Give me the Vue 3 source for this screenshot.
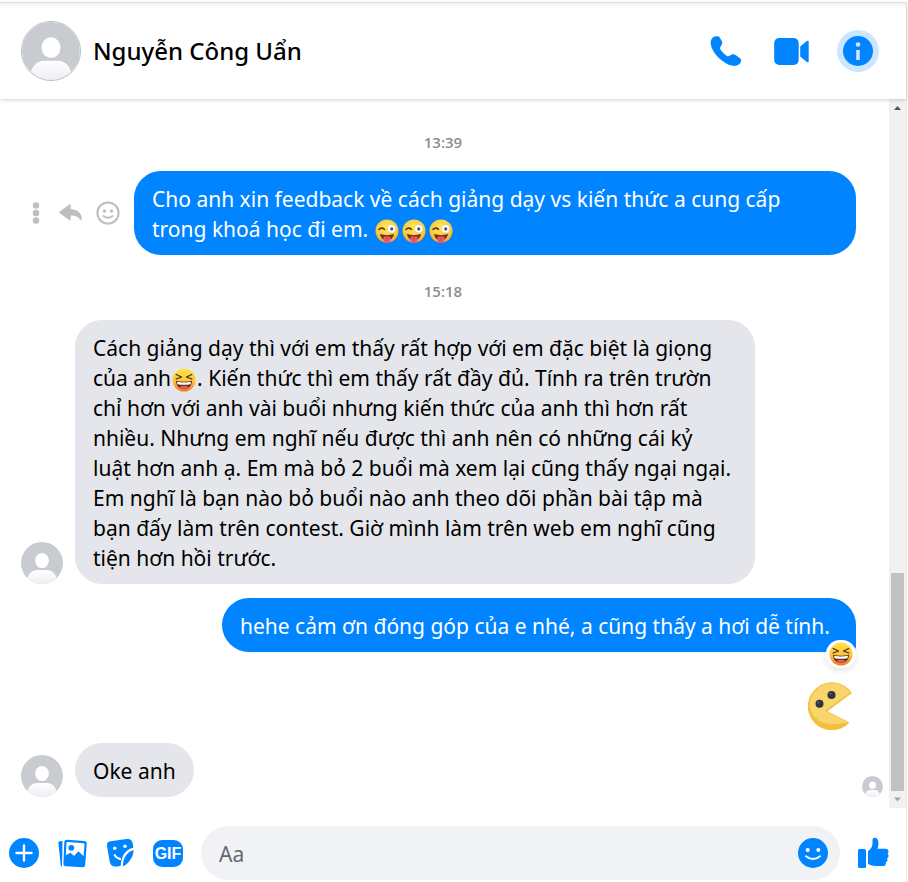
<script setup>
import { ref } from 'vue'

const draft = ref('')

const questionLines = [
  { text: 'Cho anh xin feedback về cách giảng dạy vs kiến thức a cung cấp' },
  { text: 'trong khoá học đi em. ', winks: 3 },
]

const answerLines = [
  { text: 'Cách giảng dạy thì với em thấy rất hợp với em đặc biệt là giọng' },
  { text: 'của anh', laugh: true, after: '. Kiến thức thì em thấy rất đầy đủ. Tính ra trên trườn' },
  { text: 'chỉ hơn với anh vài buổi nhưng kiến thức của anh thì hơn rất' },
  { text: 'nhiều. Nhưng em nghĩ nếu được thì anh nên có những cái kỷ' },
  { text: 'luật hơn anh ạ. Em mà bỏ 2 buổi mà xem lại cũng thấy ngại ngại.' },
  { text: 'Em nghĩ là bạn nào bỏ buổi nào anh theo dõi phần bài tập mà' },
  { text: 'bạn đấy làm trên contest. Giờ mình làm trên web em nghĩ cũng' },
  { text: 'tiện hơn hồi trước.' },
]
</script>

<template>
  <div class="chat">
    <svg class="defs" width="0" height="0" aria-hidden="true">
      <defs>
        <linearGradient id="bodyFade" x1="0" y1="0" x2="0" y2="1">
          <stop offset="0" stop-color="#fff" />
          <stop offset="1" stop-color="#eceef3" />
        </linearGradient>
        <radialGradient id="faceYellow" cx=".5" cy=".35" r=".65">
          <stop offset="0" stop-color="#ffe65c" />
          <stop offset=".7" stop-color="#fccb3a" />
          <stop offset="1" stop-color="#f3a528" />
        </radialGradient>
        <linearGradient id="faceOrange" x1="0" y1="0" x2="0" y2="1">
          <stop offset="0" stop-color="#ffe24d" />
          <stop offset=".55" stop-color="#fcc437" />
          <stop offset="1" stop-color="#f3762b" />
        </linearGradient>
        <clipPath id="round"><circle cx="30" cy="30" r="30" /></clipPath>
      </defs>
      <symbol id="person" viewBox="0 0 60 60">
        <g clip-path="url(#round)">
          <rect width="60" height="60" fill="#c8cbd0" />
          <ellipse cx="30" cy="26.500" rx="9.800" ry="10.800" fill="#fff" />
          <path d="M8 60c0-12 6-20 15-20h14c9 0 15 8 15 20z" fill="url(#bodyFade)" />
        </g>
      </symbol>
      <symbol id="wink" viewBox="0 0 24 24">
        <circle cx="12" cy="12" r="11.500" fill="url(#faceYellow)" />
        <path d="M4 10.500q2.500-2.700 5.500-.2" fill="none" stroke="#553b1c" stroke-width="1.600" stroke-linecap="round" />
        <circle cx="16.700" cy="9.800" r="4.100" fill="#fff" stroke="#c9b67c" stroke-width=".4" />
        <circle cx="16.700" cy="9.900" r="1.600" fill="#3b5573" />
        <path d="M5 15q7 2.300 14 0c-.7 4.200-3.500 6.300-7 6.300S5.700 19.200 5 15z" fill="#6d2f1f" />
        <path d="M8.500 17.500h7v3.700a3.500 3 0 0 1-7 0z" fill="#f0566a" />
        <path d="M12 18.500v3" stroke="#c92f4a" stroke-width=".8" />
      </symbol>
      <symbol id="laugh" viewBox="0 0 24 24">
        <circle cx="12" cy="12" r="11.500" fill="url(#faceOrange)" />
        <path d="M4.200 6.500 9.500 9l-5.300 2M19.800 6.500 14.500 9l5.300 2" fill="none" stroke="#493018" stroke-width="1.300" stroke-linecap="round" stroke-linejoin="round" />
        <path d="M4 12.800q8 1.800 16 0c0 5-3.300 8-8 8s-8-3-8-8z" fill="#5b2b20" />
        <path d="M5 13.700q7 1.400 14 0l-.5 2.500q-6.500 1.200-13 0z" fill="#fff" />
        <path d="M7.300 18.800q4.700-2 9.400 0-2 1.700-4.700 1.700t-4.700-1.700z" fill="#ee5a62" />
      </symbol>
    </svg>

    <main class="conversation">
      <header class="top">
        <svg class="avatar avatar-large" role="img" aria-label="Nguyễn Công Uẩn"><use href="#person" /></svg>
        <h1 class="name">Nguyễn Công Uẩn</h1>
        <div class="calls">
          <button type="button" class="icon-button" aria-label="Gọi thoại">
            <svg width="36" height="34" viewBox="0 0 36 34" fill="#0084ff">
              <path d="M6.800 2.300C3.500 2.800 1.300 6 1.700 9.400c.6 5 3.300 9.800 7.900 14.300 4.700 4.600 9.800 7.500 14.300 8.100 4 .5 7.500-1.400 8.200-4.800.2-1.200-.2-2-1.200-2.800l-4-2.900c-1.700-1.200-3.500-1.200-5.100-.3l-1.700 1c-.9.500-1.700.4-2.500-.2-2.600-1.900-4.800-4.100-6.300-6.600-.5-.8-.5-1.500 0-2.200l1.300-2c.9-1.400.9-2.700.1-4.100l-2.100-3.600c-.8-1-2.300-1.300-3.800-1z" />
            </svg>
          </button>
          <button type="button" class="icon-button" aria-label="Gọi video">
            <svg width="36" height="34" viewBox="0 0 36 34" fill="#0084ff">
              <rect x="1.200" y="4" width="24.500" height="27" rx="5" />
              <path d="M27.200 12.500 33.500 7.300c1.300-1 2.200-.5 2.200 1v18.400c0 1.500-.9 2-2.200 1l-6.300-5.200z" />
            </svg>
          </button>
          <button type="button" class="icon-button" aria-label="Thông tin cuộc trò chuyện">
            <svg width="42" height="42" viewBox="0 0 42 42">
              <circle cx="21" cy="21" r="21" fill="#cce6ff" />
              <circle cx="21" cy="21" r="15" fill="#0084ff" />
              <circle cx="21" cy="14.500" r="2.300" fill="#cce6ff" />
              <rect x="19.200" y="20" width="3.600" height="10" fill="#cce6ff" />
            </svg>
          </button>
        </div>
      </header>

      <div class="viewport">
        <section class="messages" aria-label="Tin nhắn">
          <time class="stamp">13:39</time>
          <div class="row sent">
            <div class="actions">
              <button type="button" class="icon-button" aria-label="Thêm">
                <svg width="16" height="24" viewBox="0 0 16 24" fill="#bcbec1">
                  <circle cx="8" cy="4.500" r="3.200" /><circle cx="8" cy="12" r="3.200" /><circle cx="8" cy="19.500" r="3.200" />
                </svg>
              </button>
              <button type="button" class="icon-button" aria-label="Trả lời">
                <svg width="24" height="24" viewBox="0 0 24 24" fill="#bcbec1">
                  <path d="M1.800 10.500 11 3.700c1-.7 1.700-.3 1.700.8v3.700c6.700 0 11.100 3.700 11.100 10.200 0 1-.8 1.200-1.400.4-2.300-3-5.100-4.300-9.700-4.200v3.700c0 1.100-.8 1.500-1.700.8l-9.200-6.800c-.7-.6-.7-1.200 0-1.800z" />
                </svg>
              </button>
              <button type="button" class="icon-button" aria-label="Bày tỏ cảm xúc">
                <svg width="24" height="24" viewBox="0 0 24 24" fill="none" stroke="#bcbec1" stroke-width="2">
                  <circle cx="12" cy="12" r="10.600" />
                  <circle cx="8.500" cy="10" r="1.700" fill="#bcbec1" stroke="none" />
                  <circle cx="15.500" cy="10" r="1.700" fill="#bcbec1" stroke="none" />
                  <path d="M7.500 15q4.500 3.500 9 0" stroke-linecap="round" />
                </svg>
              </button>
            </div>
            <p class="bubble bubble-sent bubble-question">
              <span v-for="line in questionLines" :key="line.text" class="line">{{ line.text }}<svg v-for="n in line.winks || 0" :key="n" class="emoji emoji-spaced" role="img" aria-label="😜"><use href="#wink" /></svg></span>
            </p>
          </div>

          <time class="stamp">15:18</time>
          <div class="row">
            <svg class="avatar" aria-hidden="true"><use href="#person" /></svg>
            <p class="bubble bubble-received bubble-answer">
              <span v-for="line in answerLines" :key="line.text" class="line">{{ line.text }}<template v-if="line.laugh"><svg class="emoji" role="img" aria-label="😆"><use href="#laugh" /></svg>{{ line.after }}</template></span>
            </p>
          </div>
          <div class="row sent follow">
            <p class="bubble bubble-sent bubble-last">
              hehe cảm ơn đóng góp của e nhé, a cũng thấy a hơi dễ tính.
              <span class="reaction"><svg width="24" height="24" role="img" aria-label="😆"><use href="#laugh" /></svg></span>
            </p>
          </div>
          <div class="row sent sticker">
            <svg width="48" height="48" viewBox="0 0 48 48" role="img" aria-label="Pacman">
              <path d="M43.500 10.500A24 24 0 1 0 41.500 40.500L19 29z" fill="#f2c03a" />
              <path d="M42 10.500A22.500 22.500 0 0 0 1.500 22c0 10 8.500 19.500 21.500 20 7 .4 12.500-1 17-2L17 29z" fill="#f8d56d" />
              <path d="M43.500 10.500 18.500 28.800" stroke="#f2c03a" stroke-width="1.500" />
              <circle cx="23.500" cy="13" r="4" fill="#2d3440" /><circle cx="11.500" cy="21.700" r="4" fill="#2d3440" />
              <circle cx="22.300" cy="11.800" r="1.200" fill="#536071" /><circle cx="10.300" cy="20.500" r="1.200" fill="#536071" />
            </svg>
          </div>
          <div class="row closing">
            <svg class="avatar" aria-hidden="true"><use href="#person" /></svg>
            <p class="bubble bubble-received">Oke anh</p>
            <svg class="seen" role="img" aria-label="Đã xem"><use href="#person" /></svg>
          </div>
        </section>
        <div class="scrollbar" aria-hidden="true">
          <svg width="17" height="17" viewBox="0 0 17 17"><path d="M5 11h7L8.500 7z" fill="#505050" /></svg>
          <div class="track"><div class="thumb"></div></div>
          <svg width="17" height="17" viewBox="0 0 17 17"><path d="M5 6.500h7l-3.500 4z" fill="#a3a3a3" /></svg>
        </div>
      </div>

      <form class="composer" @submit.prevent>
        <div class="tools">
          <button type="button" class="icon-button" aria-label="Mở thêm">
            <svg width="30" height="30" viewBox="0 0 30 30">
              <circle cx="15" cy="15" r="15" fill="#0084ff" />
              <path d="M15 7.500v15M7.500 15h15" stroke="#fff" stroke-width="2.400" stroke-linecap="round" />
            </svg>
          </button>
          <button type="button" class="icon-button" aria-label="Đính kèm ảnh">
            <svg width="30" height="30" viewBox="0 0 30 30">
              <path d="M5.500 2.800 2.700 3.200c-1 .2-1.400.8-1.300 1.800L3.700 27c.1 1 .7 1.700 1.300 1.600z" fill="#0084ff" />
              <path d="M10 1.800 27.300 3a2.500 2.500 0 0 1 2.400 2.700L28.200 27a2.500 2.500 0 0 1-2.700 2.300L8.700 28.200a2.500 2.500 0 0 1-2.300-2.700L7.300 4.100A2.500 2.500 0 0 1 10 1.800z" fill="#0084ff" />
              <path d="M10.500 4 26.500 5.200c.7.100 1 .5 1 1.100l-.9 11.900-5.200-4.900-4.300 4.600-3.600-3.100-4.700 2.500.7-12.400c0-.6.400-.9 1-.9z" fill="#fff" />
              <circle cx="14.300" cy="9.800" r="2.900" fill="#0084ff" />
            </svg>
          </button>
          <button type="button" class="icon-button" aria-label="Chọn nhãn dán">
            <svg width="30" height="30" viewBox="0 0 30 30">
              <path d="M5.500 3.300 21.500 1c3.700-.5 5.800 1 6.300 4.700l.5 4c-7.400 1.300-12 8-12.700 18.200l-3.700.5c-4.300.6-6.500-1-7.200-5L2.100 8.500c-.5-3.200.5-4.800 3.400-5.200z" fill="#0084ff" />
              <path d="M18 28.200c0-8.400 3.700-14 10.500-16.200.2 3.500-1 7-3.500 10.200-2 2.700-4 4.800-7 6z" fill="#0084ff" />
              <circle cx="9.700" cy="10.200" r="1.700" fill="#fff" /><circle cx="20" cy="8.200" r="1.700" fill="#fff" />
              <path d="M9.700 17.200c1.200 2 3 3.200 5.200 3.700" fill="none" stroke="#fff" stroke-width="2.200" stroke-linecap="round" />
            </svg>
          </button>
          <button type="button" class="icon-button gif" aria-label="Chọn file GIF">GIF</button>
        </div>
        <div class="field">
          <input v-model="draft" class="entry" type="text" placeholder="Aa" aria-label="Nhập tin nhắn" />
          <button type="button" class="icon-button" aria-label="Chọn biểu tượng cảm xúc">
            <svg width="30" height="30" viewBox="0 0 30 30">
              <circle cx="15" cy="15" r="15" fill="#0084ff" />
              <circle cx="9.700" cy="12" r="2" fill="#fff" /><circle cx="20.300" cy="12" r="2" fill="#fff" />
              <path d="M8 18.300q7 5.500 14 0" fill="none" stroke="#fff" stroke-width="2" stroke-linecap="round" />
            </svg>
          </button>
        </div>
        <button type="button" class="icon-button" aria-label="Gửi lượt thích">
          <svg width="32" height="32" viewBox="0 0 32 32" fill="#0084ff">
            <rect x="1" y="12" width="8" height="19" rx="1.500" />
            <path d="M11 14.200c2.400-1.600 4.500-4.500 4.500-7.700V3c0-1.500 1-2.300 2.300-2.300 2.500 0 3.700 2.500 3.700 5.500 0 2.200-.5 4-1 5.600h8c1.900 0 3 1.200 3 2.700 0 1-.3 1.700-.9 2.200.7.500 1 1.200 1 2.100 0 1.200-.6 2.100-1.600 2.500.4.500.6 1.100.5 1.800-.1 1.100-.8 1.900-1.800 2.200.2.500.3 1 .1 1.600-.4 1.600-1.600 2.100-3.200 2.100h-7c-3 0-4.800-1-7.600-2z" />
          </svg>
        </button>
      </form>
    </main>
  </div>
</template>

<style>
body {
  margin: 0;
  background: #fff;
}
</style>

<style scoped>
.chat {
  box-sizing: border-box;
  min-height: 100vh;
  padding: 3px 2px 0 0;
  font-family: "Noto Sans", "Open Sans", sans-serif;
  color: #000;
  overflow: hidden;
}
.defs {
  position: absolute;
}
.conversation {
  display: flex;
  flex-direction: column;
  min-height: calc(100vh - 3px);
  box-shadow: 0 0 0 1px #e8e8e8;
}
.top {
  display: flex;
  align-items: center;
  gap: 12px;
  padding: 18px 27px 18px 21px;
  background: linear-gradient(#f0f0f0, #fff 5px);
  box-shadow: 0 1px 4px rgba(0, 0, 0, 0.18);
  z-index: 1;
}
.name {
  flex: 1;
  margin: 0;
  font-size: 24px;
  font-weight: 500;
  line-height: 32px;
}
.calls {
  display: flex;
  align-items: center;
  gap: 28px;
}
.icon-button {
  display: flex;
  flex-shrink: 0;
  padding: 0;
  border: 0;
  background: none;
  cursor: pointer;
}
.avatar {
  flex-shrink: 0;
  width: 42px;
  height: 42px;
}
.avatar-large {
  box-sizing: border-box;
  width: 60px;
  height: 60px;
  border: 1px solid #b9bcc2;
  border-radius: 50%;
}
.viewport {
  display: flex;
  flex: 1;
}
.messages {
  display: flex;
  flex: 1;
  flex-direction: column;
  min-width: 0;
  padding: 7px 6px 11px 21px;
}
.stamp {
  padding: 24px 18px 17px 0;
  font-family: "Open Sans", "Noto Sans", sans-serif;
  font-size: 15px;
  font-weight: 600;
  line-height: 24px;
  text-align: center;
  color: #8a8d91;
}
.row {
  display: flex;
  align-items: flex-end;
  gap: 12px;
}
.sent {
  justify-content: flex-end;
  padding-right: 27px;
}
.follow {
  margin-top: 14px;
}
.sticker {
  margin-top: 30px;
}
.closing {
  margin-top: 13px;
}
.actions {
  display: flex;
  flex: 1;
  align-items: center;
  align-self: center;
  justify-content: flex-end;
  gap: 14px;
  padding-right: 2px;
}
.bubble {
  box-sizing: border-box;
  margin: 0;
  padding: 13px 18px 11px;
  border-radius: 27px;
  font-size: 21px;
  line-height: 30px;
}
.bubble-sent {
  background: #0084ff;
  color: #fff;
}
.bubble-received {
  background: #e4e6eb;
}
.bubble-question {
  flex: 0 1 722px;
}
.bubble-answer {
  flex: 0 1 680px;
}
.bubble-last {
  position: relative;
  flex: 0 1 634px;
  border-bottom-right-radius: 6px;
}
.line {
  display: block;
  white-space: pre-wrap;
}
.emoji {
  width: 24px;
  height: 24px;
  margin: 0 1px;
  vertical-align: -6px;
}
.emoji-spaced {
  margin: 0 2px 0 1px;
}
.reaction {
  position: absolute;
  right: 0;
  bottom: -16px;
  display: flex;
  padding: 2px 3px;
  border-radius: 14px;
  background: #fff;
  box-shadow: 0 3px 6px rgba(0, 0, 0, 0.1);
}
.seen {
  width: 21px;
  height: 21px;
  margin-left: auto;
}
.scrollbar {
  display: flex;
  flex-direction: column;
  width: 17px;
  background: #f1f1f1;
}
.track {
  display: flex;
  flex: 1;
  flex-direction: column;
  justify-content: flex-end;
  padding: 0 2px;
}
.thumb {
  height: 32.3%;
  background: #c1c1c1;
}
.composer {
  display: flex;
  align-items: center;
  gap: 17px;
  padding: 18px 17px 2px 9px;
}
.tools {
  display: flex;
  align-items: center;
  gap: 18px;
  margin-right: 1px;
}
.gif {
  justify-content: center;
  width: 30px;
  border-radius: 9px;
  background: #0084ff;
  color: #fff;
  font: bold 16px/27px "Liberation Sans", sans-serif;
}
.field {
  display: flex;
  flex: 1;
  align-items: center;
  box-sizing: border-box;
  min-width: 0;
  height: 54px;
  padding: 0 12px 0 18px;
  border-radius: 27px;
  background: #f0f2f5;
}
.entry {
  flex: 1;
  min-width: 0;
  padding: 1px 0 0;
  border: 0;
  outline: 0;
  background: none;
  font: inherit;
  font-size: 21px;
  line-height: 30px;
}
.entry::placeholder {
  color: #65676b;
  opacity: 1;
}
</style>
